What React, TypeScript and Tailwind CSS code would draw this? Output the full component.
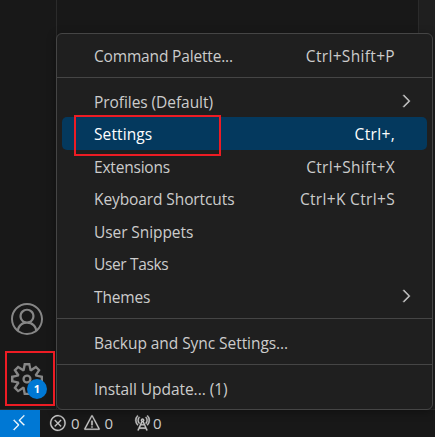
import {
  VscAccount,
  VscChevronRight,
  VscError,
  VscRadioTower,
  VscRemote,
  VscSettingsGear,
  VscWarning,
} from 'react-icons/vsc';

type Item = { label: string; keys?: string; submenu?: boolean; active?: boolean; spacing: string };

const groups: { items: Item[]; box: string }[] = [
  {
    box: 'h-[43px] pt-[5px]',
    items: [{ label: 'Command Palette...', keys: 'Ctrl+Shift+P', spacing: 'tracking-[-0.17px]' }],
  },
  {
    box: 'h-[241px] border-t pt-[6.5px]',
    items: [
      { label: 'Profiles (Default)', submenu: true, spacing: 'tracking-[-0.06px]' },
      { label: 'Settings', keys: 'Ctrl+,', active: true, spacing: 'tracking-[0.1px]' },
      { label: 'Extensions', keys: 'Ctrl+Shift+X', spacing: 'tracking-[-0.2px]' },
      { label: 'Keyboard Shortcuts', keys: 'Ctrl+K Ctrl+S', spacing: 'tracking-[-0.1px]' },
      { label: 'User Snippets', spacing: 'tracking-[-0.08px]' },
      { label: 'User Tasks', spacing: 'tracking-[-0.35px]' },
      { label: 'Themes', submenu: true, spacing: 'tracking-[-0.15px]' },
    ],
  },
  {
    box: 'h-[46px] border-t pt-[7px]',
    items: [{ label: 'Backup and Sync Settings...', spacing: 'tracking-[-0.06px]' }],
  },
  {
    box: 'h-[45px] border-t pt-[7px]',
    items: [{ label: 'Install Update... (1)', spacing: 'tracking-[-0.05px]' }],
  },
];

function MenuRow({ item }: { item: Item }) {
  return (
    <div
      className={`mx-[5px] flex h-[32.5px] items-center justify-between rounded-[5px] pt-[1.5px] pl-[32px] ${
        item.submenu ? 'pr-[11px]' : 'pr-[32px]'
      } ${item.active ? 'bg-[#04395e] text-white' : ''}`}
    >
      <span className={item.spacing}>{item.label}</span>
      {item.keys && <span className="tracking-[0.33px]">{item.keys}</span>}
      {item.submenu && <VscChevronRight className="-mt-[2px] size-5" stroke="currentColor" strokeWidth={0.4} />}
    </div>
  );
}

export default function App() {
  return (
    <div className="relative flex h-[437px] w-[435px] flex-col overflow-hidden bg-[#181818] font-['Open_Sans','Noto_Sans',sans-serif] text-[15.5px] leading-5 whitespace-nowrap text-[#cccccc]">
      <div className="flex h-[409px]">
        <div className="flex w-[57px] flex-col justify-end border-r border-[#2b2b2b] text-[#868686]">
          <div className="flex h-[60px] items-center pl-[11px]">
            <VscAccount className="size-8" />
          </div>
          <div className="relative flex h-[60px] items-center pl-[11px]">
            <VscSettingsGear className="size-8" />
            <span className="absolute top-[30px] left-[27px] flex size-5 items-center justify-center rounded-full bg-[#0078d4] text-[11px] font-bold text-white">
              1
            </span>
          </div>
        </div>
        <div className="w-[362px] border-r border-[#2b2b2b]" />
        <div className="flex-1 bg-[#1f1f1f]" />
      </div>

      <div className="flex h-7 items-center border-t border-[#2b2b2b] text-[15px]">
        <div className="flex h-full w-10 items-center justify-center bg-[#0078d4] pr-[3px] pb-[2px] text-white">
          <VscRemote className="size-[18px]" stroke="currentColor" strokeWidth={0.4} />
        </div>
        <div className="flex items-center pb-px pl-[9px]">
          <VscError className="size-[18px]" stroke="currentColor" strokeWidth={0.25} />
          <span className="ml-[4px] w-[9px]">0</span>
          <VscWarning className="ml-[3px] size-[18px]" stroke="currentColor" strokeWidth={0.25} />
          <span className="ml-[3.5px] w-[9px]">0</span>
          <VscRadioTower className="ml-[19px] size-[18px]" stroke="currentColor" strokeWidth={0.35} />
          <span className="ml-[2.5px] w-[9px]">0</span>
        </div>
      </div>

      <div className="absolute top-[33px] left-[56px] h-[377px] w-[377px] rounded-[6px] border border-[#454545] bg-[#1f1f1f] shadow-[0_2px_10px_rgba(0,0,0,0.36)]">
        {groups.map((group, i) => (
          <div key={i} className={`border-[#454545] ${group.box}`}>
            {group.items.map((item) => (
              <MenuRow key={item.label} item={item} />
            ))}
          </div>
        ))}
      </div>

      <div className="absolute top-[115px] left-[74px] h-[41px] w-[147px] border-2 border-[#ed1c24]" />
      <div className="absolute top-[351px] left-[5px] h-[55px] w-[50px] border-2 border-[#ed1c24]" />
    </div>
  );
}
